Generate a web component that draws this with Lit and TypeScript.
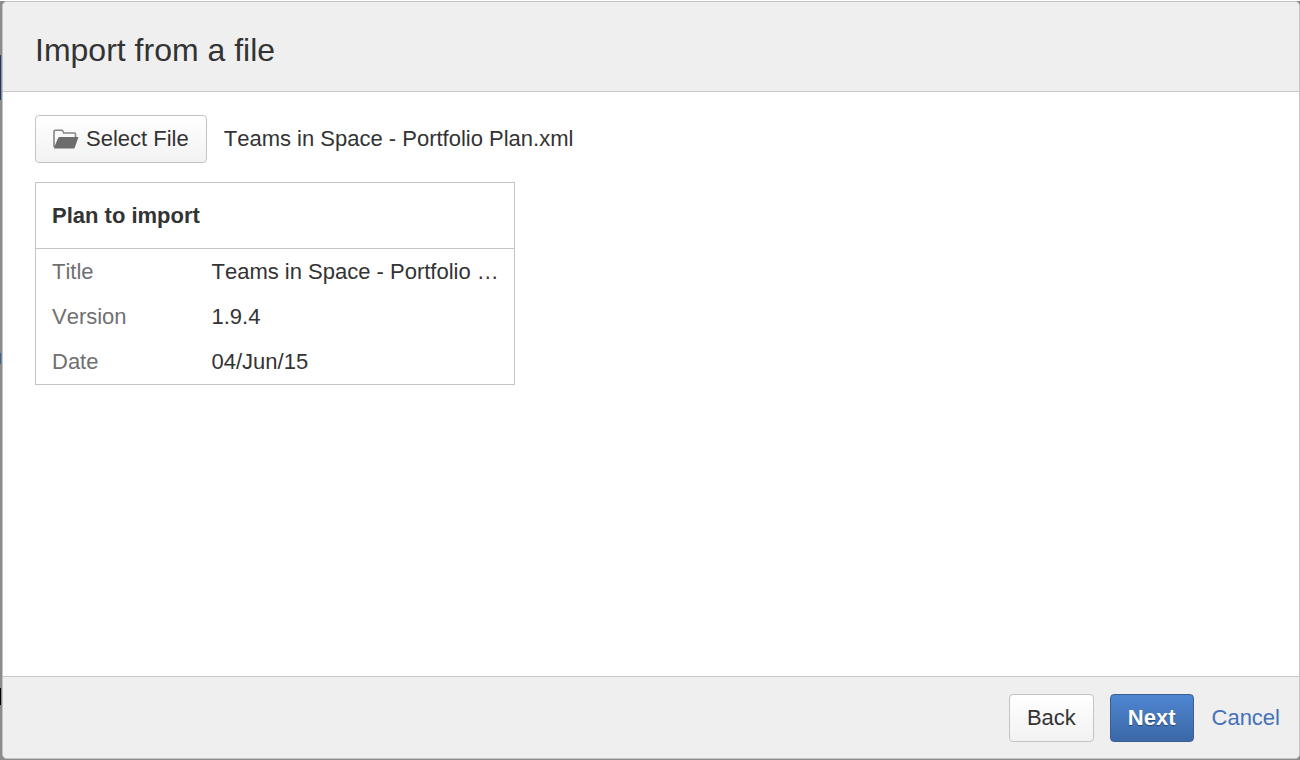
import { LitElement, html, css } from "lit";
import { customElement, property } from "lit/decorators.js";

interface PlanField {
  label: string;
  value: string;
}

@customElement("app-root")
export class AppRoot extends LitElement {
  @property() fileName = "Teams in Space - Portfolio Plan.xml";

  @property({ attribute: false }) fields: PlanField[] = [
    { label: "Title", value: "Teams in Space - Portfolio Plan" },
    { label: "Version", value: "1.9.4" },
    { label: "Date", value: "04/Jun/15" },
  ];

  static styles = css`
    :host {
      display: block;
      box-sizing: border-box;
      height: 100vh;
      padding: 1px 0 1px 2px;
      background:
        linear-gradient(#fff, #fff) 0 0 / 100% 1px no-repeat,
        linear-gradient(#1c3870, #1c3870) 0 55px / 1px 45px no-repeat,
        linear-gradient(#2f6396, #2f6396) 0 353px / 1px 11px no-repeat,
        linear-gradient(#000, #000) 0 688px / 1px 17px no-repeat,
        #8c8c8c;
      color: #333;
      font-family: "Liberation Sans", Arial, sans-serif;
      font-size: 22px;
      line-height: 32px;
      font-kerning: none;
    }
    .dialog {
      box-sizing: border-box;
      height: 100%;
      display: flex;
      flex-direction: column;
      border: 1px solid #c4c4c4;
      border-radius: 5px;
      background: #fff;
      overflow: hidden;
    }
    .header {
      padding: 28px 32px 21px;
      background: #efefef;
      border-bottom: 1px solid #c8c8c8;
    }
    .title {
      margin: 0;
      font-size: 32px;
      line-height: 40px;
      font-weight: 400;
    }
    .content {
      flex: 1;
      min-height: 0;
      padding: 23px 32px;
    }
    .picker {
      display: flex;
      align-items: center;
      gap: 17px;
      margin-bottom: 19px;
    }
    .button {
      box-sizing: border-box;
      display: inline-flex;
      align-items: center;
      gap: 7px;
      height: 48px;
      margin: 0;
      padding: 0 17px;
      border: 1px solid #c4c4c4;
      border-radius: 4px;
      background: linear-gradient(#fff, #f2f2f2);
      color: #333;
      font: inherit;
      cursor: pointer;
    }
    .primary {
      border-color: #3a5f93;
      background: linear-gradient(#4f86d2, #3b68a6);
      color: #fff;
      font-weight: 700;
      text-shadow: 0 1px 1px rgba(0, 0, 0, 0.4);
    }
    .folder {
      width: 26px;
      height: 20px;
    }
    .plan {
      width: 480px;
      max-width: 100%;
      table-layout: fixed;
      border: 1px solid #c4c4c4;
      border-collapse: collapse;
      text-align: left;
    }
    .label-col {
      width: 160px;
    }
    .caption {
      padding: 16px;
      line-height: 33px;
      border-bottom: 1px solid #c4c4c4;
      font-weight: 700;
    }
    .label,
    .value {
      padding: 7px 0 6px 16px;
      font-weight: 400;
    }
    .label {
      color: #707070;
    }
    .value {
      padding-right: 10px;
      overflow: hidden;
      text-overflow: ellipsis;
      white-space: nowrap;
    }
    .footer {
      display: flex;
      align-items: center;
      justify-content: flex-end;
      gap: 16px;
      padding: 17px 19px 16px;
      background: #efefef;
      border-top: 1px solid #c8c8c8;
    }
    .cancel {
      padding-left: 2px;
      color: #4471b8;
      text-decoration: none;
    }
  `;

  render() {
    return html`
      <section class="dialog" role="dialog" aria-labelledby="title">
        <header class="header">
          <h1 class="title" id="title">Import from a file</h1>
        </header>
        <main class="content">
          <div class="picker">
            <button class="button" type="button">
              <svg class="folder" viewBox="0 0 26 20" aria-hidden="true">
                <path
                  d="M1 18V2.200q0-1 1-1h6.600q.8 0 1.200.8l1 2h10.700q1 0 1 1V8"
                  fill="none"
                  stroke="#858585"
                  stroke-width="1.600"
                />
                <path
                  d="M7 8H25.500L21.800 18.400q-.4 1.200-1.600 1.200H1.700Q.6 19.600 1.100 18.400L5 9.300q.5-1.300 2-1.300z"
                  fill="#6c6c6c"
                />
              </svg>
              <span>Select File</span>
            </button>
            <span>${this.fileName}</span>
          </div>
          <table class="plan">
            <colgroup>
              <col class="label-col" />
              <col />
            </colgroup>
            <thead>
              <tr>
                <th class="caption" colspan="2">Plan to import</th>
              </tr>
            </thead>
            <tbody>
              ${this.fields.map(
                (field) => html`
                  <tr>
                    <th class="label" scope="row">${field.label}</th>
                    <td class="value">${field.value}</td>
                  </tr>
                `,
              )}
            </tbody>
          </table>
        </main>
        <footer class="footer">
          <button class="button" type="button">Back</button>
          <button class="button primary" type="button">Next</button>
          <a class="cancel" href="#">Cancel</a>
        </footer>
      </section>
    `;
  }
}
